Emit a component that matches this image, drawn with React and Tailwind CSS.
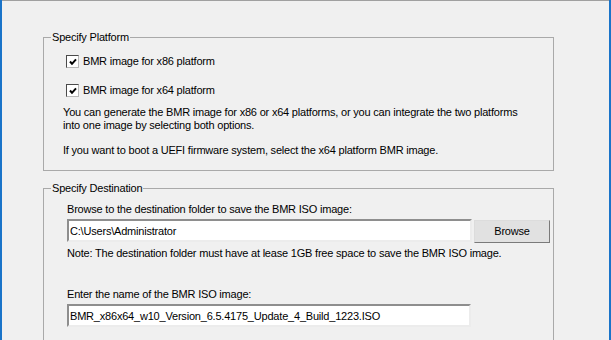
import { useState } from "react";

function CheckBox({ label, checked, onChange }) {
  return (
    <label className="flex items-center h-[13px] ml-[3px] cursor-default">
      <span
        className="w-[13px] h-[13px] bg-white border border-t-[#4a4a4a] border-l-[#4a4a4a] border-r-[#b8b8b8] border-b-[#b8b8b8] flex items-center justify-center"
        onClick={onChange}
      >
        {checked && (
          <svg width="8" height="8" viewBox="0 0 8 8">
            <path d="M1 3.5 L3 5.8 L7 1.3" stroke="#000" strokeWidth="2" fill="none" />
          </svg>
        )}
      </span>
      <span className="ml-[4px] leading-[13px]">{label}</span>
    </label>
  );
}

function TextBox({ value, width }) {
  return (
    <input
      className="h-[23px] bg-white border-2 border-t-[#8e8e8e] border-l-[#8e8e8e] border-r-[#ececec] border-b-[#ececec] px-[1px] text-[11px] outline-none"
      style={{ width }}
      defaultValue={value}
    />
  );
}

function GroupBox({ title, className, children }) {
  return (
    <div className={"relative border border-[#a9a9a9] " + className}>
      <span className="absolute -top-[7px] left-[7px] bg-[#f0f0f0] px-[1px] leading-[13px]">
        {title}
      </span>
      {children}
    </div>
  );
}

export default function App() {
  const [x86, setX86] = useState(true);
  const [x64, setX64] = useState(true);

  return (
    <div
      className="w-[611px] h-[340px] overflow-hidden bg-[#f0f0f0] border-x-2 border-[#1a74c9] text-[11px] tracking-[-0.2px] text-black"
      style={{ fontFamily: '"Liberation Sans", Arial, sans-serif' }}
    >
      <div className="h-[1px] bg-[#a0a0a0]" />
      <div className="pl-[41px] pt-[36px]">
        <GroupBox title="Specify Platform" className="w-[511px] h-[134px]">
          <div className="pl-[19px] pt-[17px] flex flex-col">
            <CheckBox label="BMR image for x86 platform" checked={x86} onChange={() => setX86(!x86)} />
            <div className="mt-[16px]">
              <CheckBox label="BMR image for x64 platform" checked={x64} onChange={() => setX64(!x64)} />
            </div>
            <p className="mt-[9px] leading-[13px]">
              You can generate the BMR image for x86 or x64 platforms, or you can integrate the two platforms
              <br />
              into one image by selecting both options.
            </p>
            <p className="mt-[12px] leading-[13px]">
              If you want to boot a UEFI firmware system, select the x64 platform BMR image.
            </p>
          </div>
        </GroupBox>

        <GroupBox title="Specify Destination" className="w-[511px] h-[200px] mt-[17px]">
          <div className="pl-[23px] pt-[14px] flex flex-col">
            <p className="leading-[13px]">Browse to the destination folder to save the BMR ISO image:</p>
            <div className="flex items-start mt-[3px]">
              <TextBox value="C:\Users\Administrator" width={405} />
              <button className="ml-[2px] mt-[1px] w-[76px] h-[23px] bg-[#e1e1e1] border border-t-[#dcdcdc] border-l-[#dcdcdc] border-r-[#7a7a7a] border-b-[#7a7a7a] text-[11px]">
                Browse
              </button>
            </div>
            <p className="mt-[4px] leading-[13px]">
              Note: The destination folder must have at lease 1GB free space to save the BMR ISO image.
            </p>
            <p className="mt-[28px] leading-[13px]">Enter the name of the BMR ISO image:</p>
            <div className="mt-[3px]">
              <TextBox value="BMR_x86x64_w10_Version_6.5.4175_Update_4_Build_1223.ISO" width={404} />
            </div>
          </div>
        </GroupBox>
      </div>
    </div>
  );
}
